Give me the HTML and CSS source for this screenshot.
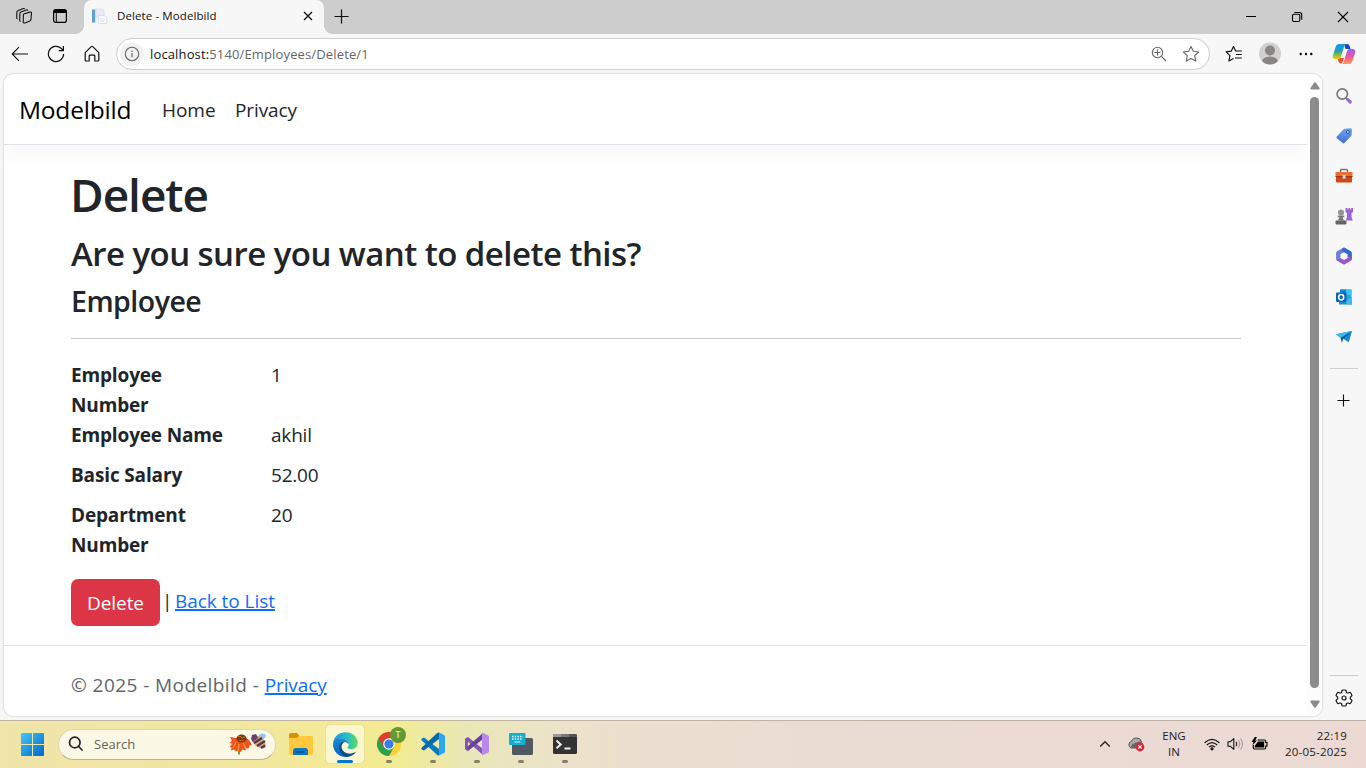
FILE: index.html
```html
<!DOCTYPE html>
<html lang="en">
<head>
<meta charset="utf-8">
<title>Delete - Modelbild</title>
<link rel="stylesheet" href="styles.css">
</head>
<body>
<div class="screen">
  <header class="tabstrip">
    <div class="strip-btn"><svg width="18" height="18" viewBox="0 0 18 18" fill="none" stroke="#111" stroke-width="1.1" stroke-linejoin="round"><path d="M9.300 6.800l5.500-1.700q1.700-.4 1.700 1.100l-.6 6.400q-.1 1-1 1.300l-5 2q-1.700.5-1.700-1l.2-6.800q0-1 .9-1.300z"/><path d="M5.700 14.300q-1.100 0-1-1.300l.2-6.600q0-1.100 1-1.500l5.500-2q1.200-.4 1.500.7"/><path d="M2.600 11.900q-1-.2-.9-1.300l.2-5.400q0-1 .9-1.400L8.300 1.600q1-.4 1.500.4"/></svg></div>
    <div class="strip-btn"><svg width="16" height="16" viewBox="0 0 16 16"><rect x="1.600" y="1.600" width="12.800" height="12.800" rx="2.200" fill="none" stroke="#000" stroke-width="1.200"/><path d="M1.500 3.500Q1.500 1.500 3.500 1.500h9q2 0 2 2V5h-13z"/><path d="M4.300 5v9" stroke="#000"/></svg></div>
    <div class="tab">
      <svg width="17" height="17" viewBox="0 0 17 17"><path d="M1 1h12v14H1z" fill="#eef1f5"/><path d="M1 1.500h3.200v13H1z" fill="#5fa3d6"/><path d="M5 1h6l2 2v6H5z" fill="#e8ecf1" stroke="#d5dae0" stroke-width=".6"/><path d="M7.500 7.500h6l2.300 2v6H7.500z" fill="#f8f9fb" stroke="#d0d5dc" stroke-width=".7"/><path d="M9 11h5M9 13.200h4" stroke="#cfd4dc" stroke-width=".8"/></svg>
      <span class="tab-title">Delete - Modelbild</span>
      <svg width="10" height="10" viewBox="0 0 10 10" stroke="#111" stroke-width="1.300"><path d="M1 1l8 8M9 1L1 9"/></svg>
    </div>
    <svg class="newtab" width="15" height="15" viewBox="0 0 15 15" stroke="#111" stroke-width="1.200"><path d="M7.500 .5v14M.5 7.500h14"/></svg>
    <div class="wincontrols">
      <svg width="12" height="12" viewBox="0 0 12 12"><path d="M1 5.500h10" stroke="#000"/></svg>
      <svg width="12" height="12" viewBox="0 0 12 12" fill="none" stroke="#000" stroke-width="1.100"><rect x="1.500" y="3.200" width="7.300" height="7.300" rx="1.400"/><path d="M3.500 1.500h5q2.200 0 2.200 2.200v5"/></svg>
      <svg width="12" height="12" viewBox="0 0 12 12" stroke="#000" stroke-width="1.100"><path d="M1 1l10 10M11 1L1 11"/></svg>
    </div>
  </header>

  <div class="toolbar">
    <div class="tool"><svg width="18" height="16" viewBox="0 0 18 16" fill="none" stroke="#111" stroke-width="1.100"><path d="M17 8H1.500M8 1.200L1.200 8 8 14.800"/></svg></div>
    <div class="tool"><svg width="18" height="18" viewBox="0 0 18 18" fill="none" stroke="#111" stroke-width="1.200"><path d="M16.600 9A7.600 7.600 0 1 1 14 3.200l2.300 2.300M16.400 1v4.600h-4.600"/></svg></div>
    <div class="tool"><svg width="16" height="17" viewBox="0 0 16 17" fill="none" stroke="#111" stroke-width="1.200" stroke-linejoin="round"><path d="M1.200 7.700L7.200 1.600q.8-.7 1.600 0l6 6.100V15q0 1-1 1h-3v-5q0-.8-.8-.8H6q-.8 0-.8.8v5h-3q-1 0-1-1z"/></svg></div>
    <div class="address">
      <span class="info"><svg width="16" height="16" viewBox="0 0 16 16" fill="none" stroke="#666" stroke-width="1.100"><circle cx="8" cy="8" r="6.700"/><path d="M8 7v4.300M8 4.500V6" stroke-width="1.200"/></svg></span>
      <span class="url"><b>localhost:</b>5140/Employees/Delete/1</span>
      <span class="address-icons">
        <svg width="16" height="16" viewBox="0 0 16 16" fill="none" stroke="#666" stroke-width="1.100"><circle cx="6.500" cy="6.500" r="5.200"/><path d="M10.400 10.400l4.600 4.600M3.500 6.500h6M6.500 3.500v6"/></svg>
        <svg width="18" height="18" viewBox="0 0 18 18" fill="none" stroke="#666" stroke-width="1.100" stroke-linejoin="round"><path d="M9 1.400l2.300 4.900 5.400.7-4 3.700 1 5.400L9 13.500l-4.700 2.600 1-5.400-4-3.700 5.400-.7z"/></svg>
      </span>
    </div>
    <div class="tool fav"><svg width="18" height="18" viewBox="0 0 18 18" fill="none" stroke="#111" stroke-width="1.200" stroke-linejoin="round"><path d="M10.800 6.200L8.500 1.600 6.200 6.200l-5 .7 3.700 3.700-1 5.400 4.600-2.500M10.800 6h6M11 9.500h5.800M10 13h6.800"/></svg></div>
    <div class="tool"><svg width="22" height="23" viewBox="0 0 22 23"><defs><clipPath id="face"><circle cx="11" cy="11.500" r="11"/></clipPath></defs><g clip-path="url(#face)"><path d="M0 0h22v23H0z" fill="#d2d0ce"/><circle cx="11" cy="8.500" r="5" fill="#888582"/><ellipse cx="11" cy="20" rx="8" ry="5.600" fill="#888582"/></g></svg></div>
    <div class="tool"><svg width="14" height="4" viewBox="0 0 14 4"><circle cx="1.700" cy="2" r="1.200"/><circle cx="7" cy="2" r="1.200"/><circle cx="12.300" cy="2" r="1.200"/></svg></div>
    <div class="copilot"><svg width="24" height="22" viewBox="0 0 24 22"><defs><linearGradient id="cpA" x2="0" y2="1"><stop stop-color="#159cf0"/><stop offset=".45" stop-color="#219ec0"/><stop offset=".7" stop-color="#79bd42"/><stop offset="1" stop-color="#f7c900"/></linearGradient><linearGradient id="cpB" x2="0" y2="1"><stop stop-color="#a05bff"/><stop offset=".5" stop-color="#ee5695"/><stop offset="1" stop-color="#ff9b56"/></linearGradient></defs><path d="M12 1h3q2 0 2.600 2l1 3h-5z" fill="#1748c9"/><path d="M6 15h6l-1.500 4Q9.800 21 8 20.500 6.700 20 6 17z" fill="#ed5132"/><path d="M7 1h8q-2 0-2.700 2L9.200 13q-.7 3-3.200 3H3.500Q.1 16 1 12L3.600 4Q4.500 1 7 1z" fill="url(#cpA)"/><path d="M17 21H9q2 0 2.700-2l3.100-10q.7-3 3.200-3h2.500q3.400 0 2.500 4l-2.600 8q-.9 3-3.400 3z" fill="url(#cpB)"/></svg></div>
  </div>

  <div class="middle">
    <div class="viewport">
      <div class="page">
        <nav class="navbar"><a class="brand">Modelbild</a><a class="home">Home</a><a class="privacy">Privacy</a></nav>
        <main class="container">
          <h1>Delete</h1>
          <h3>Are you sure you want to delete this?</h3>
          <h4>Employee</h4>
          <hr>
          <dl>
            <dt>Employee<br>Number</dt><dd>1</dd>
            <dt>Employee Name</dt><dd>akhil</dd>
            <dt>Basic Salary</dt><dd>52.00</dd>
            <dt>Department<br>Number</dt><dd>20</dd>
          </dl>
          <div class="actions"><button class="danger">Delete</button><span class="bar">|</span><a class="link">Back to List</a></div>
        </main>
        <footer class="footer"><span class="copy">© 2025 - Modelbild - </span><a class="link">Privacy</a></footer>
      </div>
      <div class="scrollbar">
        <svg width="10" height="8" viewBox="0 0 10 8"><path d="M4 .8Q5-.4 6 .8L9.500 6q.8 1.500-1 1.500h-7Q-.3 7.500.5 6z" fill="#8b8b8b"/></svg>
        <div class="thumb"></div>
        <svg width="10" height="8" viewBox="0 0 10 8"><path d="M4 7.200Q5 8.400 6 7.200L9.500 2q.8-1.500-1-1.500h-7Q-.3.5.5 2z" fill="#8b8b8b"/></svg>
      </div>
    </div>

    <aside class="sidebar">
      <div class="side"><svg width="18" height="18" viewBox="0 0 18 18" fill="none"><circle cx="7.300" cy="7" r="5.200" stroke="#777" stroke-width="1.700"/><path d="M10.800 10.800l2 2" stroke="#777" stroke-width="1.500"/><path d="M12.800 12.600l2.500 2.400" stroke="#9a66d6" stroke-width="3.200" stroke-linecap="round"/></svg></div>
      <div class="side"><svg width="18" height="18" viewBox="0 0 18 18"><defs><linearGradient id="tg" x2="0" y2="1"><stop stop-color="#6fa5f0"/><stop offset="1" stop-color="#416fd5"/></linearGradient></defs><path d="M9.500 1.800l6-.6q1.500 0 1.500 1.500l-.4 5.300q0 .7-.7 1.300l-6.600 6.800q-.8.8-1.600 0L1.700 11.200q-.8-.8 0-1.600l6.700-7.200q.4-.5 1.100-.6z" fill="url(#tg)"/><circle cx="12.900" cy="5" r="1.500" fill="#d7eaff" stroke="#24459a"/></svg></div>
      <div class="side"><svg width="18" height="16" viewBox="0 0 18 16"><path d="M5.500 4V2.500q0-1 1-1h5q1 0 1 1V4" fill="none" stroke="#777" stroke-width="1.400"/><rect x="1" y="4" width="16" height="10.500" rx="1" fill="#cf4914"/><path d="M.5 4h17v4.500H.5z" fill="#ed6e35"/><path d="M.5 8h17v1H.5z" fill="#a92f08"/><rect x="7.600" y="6.700" width="3" height="4" rx=".6" fill="#c4dce8"/></svg></div>
      <div class="side"><svg width="18" height="18" viewBox="0 0 18 18"><path d="M10.500 1h2v1.500h1V1h1.700v1.500h1V1H18v4l-1.500 1v4l1.300 3.500h-7L12 10V6l-1.500-1z" fill="#9b63d8"/><circle cx="6" cy="5.500" r="3" fill="#939393"/><path d="M2.700 8.500h6.600v1.700H7.600q0 2.200 2.400 3.300H2q2.400-1.100 2.400-3.300H2.700z" fill="#777"/><rect x=".5" y="13.500" width="11" height="4" rx="1" fill="#666"/></svg></div>
      <div class="side"><svg width="18" height="18" viewBox="0 0 18 18"><path d="M9 .5l7 4q.7.500.7 1.500v6q0 1-.7 1.500l-6 3.500q-1 .6-2 0l-6-3.500q-.7-.5-.7-1.500V6q0-1 .7-1.500z" fill="#8268ce"/><path d="M7.500 1.200L9 .5l7 4q.7.500.7 1.500v7l-4.700-2.200V7.400L7.300 4.500z" fill="#3269c9"/><path d="M16.700 10v2q0 1-.7 1.500l-6 3.500q-1 .6-2 0l-6-3.500L6.500 11 9 12.500l3-1.700 1.200-1.500z" fill="#9f58c7"/><path d="M1.300 6v6q0 1 .7 1.500L6 11V7.400L9 5.600 5.300 2.700 2 4.500q-.7.5-.7 1.500z" fill="#6a83da"/><path d="M9 5.200l3.500 2v3.800L9 13l-3.500-2V7.200z" fill="#fff"/></svg></div>
      <div class="side"><svg width="18" height="18" viewBox="0 0 18 18"><path d="M5 1.500h11.500V11L11 14z" fill="#2aa5e8"/><path d="M5 1.500h6v6H5z" fill="#1181d1"/><path d="M11 1.500h5.500V7H11z" fill="#3bc7ef"/><path d="M4 9l6 4 7-4v7.500H4z" fill="#168edb"/><path d="M10 13l7-4v7.500h-5z" fill="#41bce9"/><rect x="1" y="4.500" width="10.500" height="9.500" rx="1" fill="#0866b4"/><ellipse cx="6.200" cy="9.200" rx="2.500" ry="2.700" fill="none" stroke="#fff" stroke-width="1.500"/></svg></div>
      <div class="side"><svg width="18" height="16" viewBox="0 0 18 16"><path d="M.8 5.300L17 2 13.800 13.200 8 9.800z" fill="#1689d3"/><path d="M.8 5.300L17 2 5.500 9z" fill="#36bced"/><path d="M5.500 9L17 2 8 10l-1 4z" fill="#07579c"/></svg></div>
      <div class="rule"></div>
      <svg class="add" width="13" height="13" viewBox="0 0 13 13" stroke="#111" stroke-width="1.100"><path d="M6.500 .5v12M.5 6.500h12"/></svg>
      <div class="rule bottom-rule"></div>
      <svg width="18" height="18" viewBox="0 0 18 18" fill="none" stroke="#111" stroke-width="1.200" stroke-linejoin="round"><path d="M7 1.300q2-.6 4 0l.5 2.200q.8.600 1.600.5l2-.7q1.300 1.300 1.900 3.300l-1.600 1.500q-.2.900 0 1.800L17 11.400q-.6 2-1.900 3.300l-2-.7q-.8-.1-1.600.5l-.5 2.200q-2 .600-4 0l-.5-2.200q-.8-.6-1.600-.5l-2 .7Q1.600 13.400 1 11.400l1.600-1.500q.2-.9 0-1.800L1 6.600q.6-2 1.900-3.300l2 .7q.8.1 1.600-.5z"/><circle cx="9" cy="9" r="2"/></svg>
    </aside>
  </div>

  <footer class="taskbar">
    <div class="start"><svg width="23" height="23" viewBox="0 0 23 23"><defs><linearGradient id="wn" x2="1" y2="1"><stop stop-color="#43c7fc"/><stop offset="1" stop-color="#0067c8"/></linearGradient></defs><path d="M1 0h10v11H0V1Q0 0 1 0zM12 0h10q1 0 1 1v10H12zM0 12h11v11H1q-1 0-1-1zM12 12h11v10q0 1-1 1H12z" fill="url(#wn)"/></svg></div>
    <div class="search">
      <svg width="16" height="16" viewBox="0 0 16 16" fill="none" stroke="#222" stroke-width="1.700"><circle cx="6.800" cy="6.500" r="5.300"/><path d="M10.600 10.500l4 4"/></svg>
      <span class="search-text">Search</span>
      <svg width="38" height="22" viewBox="0 0 38 22"><path d="M10 16v5.500" stroke="#4f8b28" stroke-width="1.600"/><path d="M1 4l6 1h10l3 2 3 5-2.500.5-.5 3-3-.5-.5 2.500-3-1-2 2.500-2.500-1.500-2 1-2-2-3 1 .5-3L.5 14 3 11 .5 9.500 3 8z" fill="#ed541b"/><path d="M7 9l-3 6M10 11l-1 7M14 10l3 6" stroke="#ff963c" stroke-width="1.400"/><ellipse cx="12.500" cy="5.500" rx="5" ry="4" fill="#7d3314"/><path d="M9 4l2-1 2 2 3-1M10 7l3 1 2-1" stroke="#c47d29" fill="none"/><path d="M30 2q3-3 7 0-1 5-6 6z" fill="#8cc5f0"/><path d="M24 3q6-2 10 3t2 9q-7 1-11-4t-1-8z" fill="#dea263"/><path d="M25 10l8-5M28 13l8-5M32 15l4-2.500" stroke="#4b365a" stroke-width="2.100"/><path d="M23 2l4-1 2 4-5 4-2-3z" fill="#65456d"/></svg>
    </div>
    <div class="apps">
      <div class="app"><svg width="24" height="22" viewBox="0 0 24 22"><path d="M0 2q0-2 2-2h6l2.500 3H22q2 0 2 2v3H0z" fill="#d89400"/><path d="M0 5h8l2-2h12q2 0 2 2v15q0 2-2 2H2q-2 0-2-2z" fill="#ffc83d"/><path d="M4 22v-4q0-3 3-3h9q3 0 3 3v4z" fill="#0876c8"/><path d="M7 19h9" stroke="#064e88" stroke-width="1.500"/></svg></div>
      <div class="app active"><svg width="25" height="25" viewBox="0 0 24 24"><defs><linearGradient id="ed1" x2="1" y2="0"><stop stop-color="#1699de"/><stop offset=".6" stop-color="#28bfc6"/><stop offset="1" stop-color="#67dc58"/></linearGradient><linearGradient id="ed2" x2="0" y2="1"><stop stop-color="#168cd5"/><stop offset="1" stop-color="#0b61b9"/></linearGradient></defs><path d="M.2 10C1.300 4 6 .2 12 .2c6.600 0 11.800 4.600 11.800 10 0 4-3 6.300-6.200 6.300-2.500 0-4-.8-3.500-1.800.6-.8 1-1.500 1-2.700C15 8 11 6 7.500 6.200 4 6.300 1.500 8 .2 10z" fill="url(#ed1)"/><path d="M.1 11C.8 7 4.500 6.100 7.500 6.100c4.500 0 7.600 3 7.600 5.900-1-1.500-2.300-2.100-3.600-2.100-2 0-3.600 2-3.400 4.500.2 4 4.400 6.500 8 6.500 2 0 3.800-.6 5.900-2-.8 1.800-4.500 5-10 5C5.200 23.900-.5 18 .1 11z" fill="url(#ed2)"/><path d="M8.500 9.600C5.500 12 5.800 16 7 18.700c1.200 3 4 4.900 6.700 5 4-.4 6.900-2.700 8.200-4.800-2.100 1.400-3.900 2-5.900 2-3.600 0-7.800-2.500-8-6.500 0-2 .7-3.700 2.500-4.400z" fill="#114a8b"/></svg></div>
      <div class="app open"><svg width="24" height="24" viewBox="0 0 24 24"><circle cx="12" cy="12" r="12" fill="#ffcf33"/><path d="M12 12L1.600 6A12 12 0 0 0 12 24l5-9z" fill="#2ca24c"/><path d="M1.600 6A12 12 0 0 1 22.400 6H12v6l-5.200 3z" fill="#e33b2e"/><circle cx="12" cy="12" r="5.800" fill="#fff"/><circle cx="12" cy="12" r="4.600" fill="#397de9"/></svg><span class="badge">T</span></div>
      <div class="app open"><svg width="24" height="24" viewBox="0 0 24 24"><path d="M1.200 6.300L3 5.500 18 17v6.300q-1 .4-1.800-.4L.8 8.500q-1-.9.4-2.200z" fill="#0879c5"/><path d="M1.200 17.700L3 18.500 18 7V.7q-1-.4-1.800.4L.8 15.500q-1 .9.4 2.200z" fill="#0a68ad"/><path d="M18 .5l5 2.400q1 .5 1 1.500v15.200q0 1-1 1.500l-5 2.400z" fill="#29a6ee"/></svg></div>
      <div class="app open"><svg width="24" height="24" viewBox="0 0 24 24"><path d="M0 7l3-2 15 12v6L2.500 9.500v6L0 17z" fill="#8558b8"/><path d="M0 17l3 2L18 7V1L2.500 14.500z" fill="#68429b"/><path d="M0 7l3-2v4L2.500 15 3 19l-3-2z" fill="#8356b2"/><path d="M17 .5l6 2.700q1 .5 1 1.500v14.600q0 1-1 1.500l-6 2.700z" fill="#b98aec"/></svg></div>
      <div class="app open"><svg width="24" height="22" viewBox="0 0 24 22"><rect x="3" y="5" width="21" height="17" rx="1.500" fill="#525961"/><rect width="16.500" height="12" rx="1" fill="#12afd3"/><path d="M3 3.500h11M3 6h11" stroke="#e5faff" stroke-width="1.300" stroke-dasharray="1.400 1.300"/><path d="M5.500 9h6" stroke="#e5faff"/></svg></div>
      <div class="app open"><svg width="24" height="20" viewBox="0 0 24 20"><rect width="24" height="20" rx="1.500" fill="#333"/><path d="M1.500 0H16v3H0V1.500Q0 0 1.500 0z" fill="#999"/><path d="M8 0h8v3H8z" fill="#777"/><path d="M16 0h6.500Q24 0 24 1.500V3h-8z" fill="#555"/><path d="M3.500 6.500l4.200 3.900-4.200 3.900M11.500 14.500h6" stroke="#eee" stroke-width="2" fill="none"/></svg></div>
    </div>
    <div class="tray">
      <svg class="chev" width="12" height="8" viewBox="0 0 12 8" fill="none" stroke="#222" stroke-width="1.300"><path d="M1.200 6.500L6 1.700l4.800 4.800"/></svg>
      <svg class="cloud" width="17" height="16" viewBox="0 0 17 16"><path d="M3 12Q.8 11 .8 8.500q0-2.200 2.500-3 1.600-3.800 5.700-3.500 3.500.2 4.500 3.500L9 12z" fill="#aaa" stroke="#555"/><path d="M3 11.500Q3 8 7 7q3-2 6.500-1.500L15 8l-5 4z" fill="#656565"/><circle cx="12" cy="11" r="4.400" fill="#dc2637"/><path d="M10.300 9.300l3.400 3.400m0-3.400l-3.400 3.400" stroke="#fff" stroke-width="1.200"/></svg>
      <div class="lang"><span>ENG</span><span>IN</span></div>
      <svg class="wifi" width="16" height="13" viewBox="0 0 16 13" fill="none" stroke="#111" stroke-width="1.200"><path d="M.6 4.800q7.400-7 14.800 0M2.800 7q5.200-4.800 10.400 0M5 9.100q3-2.600 6 0"/><circle cx="8" cy="10.800" r="1" fill="#111"/></svg>
      <svg class="sound" width="17" height="14" viewBox="0 0 17 14" fill="none" stroke="#111" stroke-width="1.100" stroke-linejoin="round"><path d="M1 4.700h2.500l3.300-3v10.600l-3.300-3H1z"/><path d="M9 4.700q1.600 2.300 0 4.600"/><path d="M11.200 3q3 4 0 8M13.500 1.500q4 5.500 0 11" stroke="#aaa09d"/></svg>
      <svg class="battery" width="17" height="14" viewBox="0 0 17 14"><path d="M6.500 3h7q1.200 0 1.200 1.200v1.300h1.300v3.500h-1.300v1.800q0 1.200-1.200 1.200H3.500q-1.200 0-1.200-1.200V8" fill="none" stroke="#000" stroke-width="1.100"/><path d="M7 4.500h6.200v6H3.800V8.800z"/><path d="M3.800 0L.5 5h2L1.300 8.500 6 3.600H4.200L6 0z"/></svg>
      <div class="clock"><span>22:19</span><span>20-05-2025</span></div>
    </div>
  </footer>
</div>
</body>
</html>
```
FILE: styles.css
```css
* { box-sizing: border-box; }
body { margin: 0; font-family: "Open Sans", "Noto Sans", sans-serif; color: #212529; }
svg { display: block; flex: none; }
.screen { width: 1366px; height: 768px; display: flex; flex-direction: column; overflow: hidden; background: #f7f7f7; }

/* Browser frame */
.tabstrip { height: 34px; flex: none; display: flex; align-items: center; background: #cdcdcd; padding-left: 6px; }
.strip-btn { width: 36px; display: flex; justify-content: center; padding-bottom: 2px; }
.tab { position: relative; width: 240px; height: 34px; margin-left: 6px; display: flex; align-items: center; padding: 0 11px 2px 7px; background: #f7f7f7; border-radius: 8px 8px 0 0; }
.tab::before, .tab::after { content: ""; position: absolute; bottom: 0; width: 8px; height: 8px; }
.tab::before { left: -8px; background: radial-gradient(circle at 0 0, #cdcdcd 7.5px, #f7f7f7 8px); }
.tab::after { right: -8px; background: radial-gradient(circle at 100% 0, #cdcdcd 7.5px, #f7f7f7 8px); }
.tab-title { flex: 1; margin: -2px 0 0 9px; font-size: 11.5px; letter-spacing: .1px; color: #111; white-space: nowrap; }
.newtab { margin: 0 0 2px 10px; }
.wincontrols { margin-left: auto; display: flex; gap: 34px; padding-right: 17px; }
.toolbar { height: 39px; flex: none; display: flex; align-items: center; padding-left: 2px; }
.tool { width: 36px; display: flex; justify-content: center; flex: none; }
.address { width: 1094px; height: 32px; margin: 1px 6px 0; border: 1px solid #cfcfcf; border-radius: 16px; background: #fff; display: flex; align-items: center; padding: 0 9px 0 3px; }
.info { width: 24px; height: 24px; border-radius: 50%; background: #f1f1f1; display: grid; place-items: center; }
.url { font-size: 13px; letter-spacing: .14px; margin-left: 6px; color: #666; white-space: nowrap; }
.url b { font-weight: 400; color: #111; }
.address-icons { margin-left: auto; display: flex; gap: 15px; align-items: center; }
.copilot { margin-left: 8px; }
.middle { height: 647px; flex: none; display: flex; padding: 1px 0 0 4px; }
.viewport { width: 1318px; height: 642px; background: #fff; border-radius: 9px; display: flex; overflow: hidden; box-shadow: 0 0 2px rgba(0,0,0,.3); }
.scrollbar { width: 15px; background: #fcfcfc; display: flex; flex-direction: column; align-items: center; padding: 8px 0 8px 0; }
.thumb { width: 9px; height: 591px; margin: 7px 0 12px; border-radius: 5px; background: #8b8b8b; }
.sidebar { width: 44px; display: flex; flex-direction: column; align-items: center; padding-top: 2px; }
.side { height: 40.1px; display: grid; place-items: center; flex: none; }
.rule { width: 28px; height: 1px; background: #cfcfcf; margin-top: 11px; flex: none; }
.add { margin: 25px 1px 0 0; }
.bottom-rule { margin: 268px 0 13px; }

/* Application page */
.page { width: 1303px; display: flex; flex-direction: column; }
.navbar { height: 71px; flex: none; display: flex; align-items: center; padding: 1px 0 0 15px; border-bottom: 1px solid #dee2e6; box-shadow: 0 10px 20px rgba(0,0,0,.035); }
.brand { font-size: 24.5px; letter-spacing: -.2px; color: #000; width: 143px; }
.home { font-size: 19px; width: 73px; letter-spacing: -.05px; }
.privacy { font-size: 19px; letter-spacing: -.1px; }
.container { width: 1170px; margin-left: 67px; padding-top: 20px; height: 500px; }
h1, h3, h4 { font-weight: 560; line-height: 1.2; margin: 0 0 10px; white-space: nowrap; }
h1 { font-size: 46px; height: 56px; padding-top: 2px; letter-spacing: -1.05px; margin-left: -1px; }
h3 { font-size: 33px; height: 41px; padding-top: 3px; letter-spacing: -.55px; }
h4 { font-size: 28.5px; height: 35px; padding-top: 2px; letter-spacing: -.5px; }
hr { border: 0; border-top: 1px solid #c8c9ca; margin: 21px 0; }
dl { margin: 0; display: grid; grid-template-columns: 200px 1fr; font-size: 19px; line-height: 30px; }
dt { font-weight: 700; letter-spacing: -.15px; }
dd { margin: 0 0 10px; letter-spacing: -.2px; }
.actions { margin-top: 19px; display: flex; align-items: flex-start; font-size: 19px; line-height: 30px; letter-spacing: -.05px; }
.danger { width: 89px; height: 47px; border: 0; border-radius: 7px; background: #dc3545; color: #fff; font: inherit; letter-spacing: -.08px; padding: 0; }
.bar { margin: 7px 6px 0 2px; width: 7px; }
.actions .link { margin-top: 7px; }
.link { color: #0d6efd; text-decoration: underline; text-decoration-thickness: 1.5px; }
.footer { height: 71px; border-top: 1px solid #dee2e6; padding: 4px 0 0 67px; font-size: 19px; line-height: 71px; color: #616568; display: flex; white-space: pre; }
.copy { letter-spacing: .43px; }
.footer .link { letter-spacing: -.1px; }

/* Taskbar */
.taskbar { height: 48px; flex: none; display: flex; align-items: center; padding-bottom: 1px; border-top: 1px solid #bdb4a4; background: linear-gradient(90deg, #f0e5aa 0, #f0e7a2 16%, #f4e996 24%, #f2ec92 29%, #e9e7b5 34%, #ebe4c5 39%, #eddfd0 46%, #eadbd3 68%, #ecd9d4 100%); }
.start { width: 58px; padding-left: 21px; }
.search { width: 218px; height: 31px; border: 1px solid #dbd6b4; border-bottom-color: #bbb58e; border-radius: 16px; background: #fbf8e5; display: flex; align-items: center; padding: 0 8px 0 9px; }
.search-text { margin-left: 10px; flex: 1; font-size: 13px; color: #666354; }
.apps { display: flex; margin-left: 3px; }
.app { position: relative; width: 44px; height: 44px; display: grid; place-items: center; }
.active { width: 38px; height: 38px; margin: 3px; border-radius: 4px; background: #faf6cf; box-shadow: 0 0 1px rgba(120,110,50,.5); }
.open::after, .active::after { content: ""; position: absolute; left: 19px; bottom: 3px; width: 6px; height: 3px; border-radius: 2px; background: #858069; }
.active::after { left: 11px; bottom: 0; width: 16px; background: #0078d4; }
.badge { position: absolute; left: 23px; top: 5px; width: 16px; height: 16px; border-radius: 50%; background: #649a36; color: #fff; font-size: 9px; line-height: 16px; text-align: center; }
.tray { margin-left: auto; display: flex; align-items: center; padding-right: 19px; color: #222; }
.lang, .clock { display: flex; flex-direction: column; font-size: 11.5px; line-height: 16px; }
.lang { width: 30px; align-items: center; margin: 0 15px 0 14px; }
.clock { width: 64px; align-items: flex-end; margin-left: 15px; white-space: nowrap; letter-spacing: .2px; }
.cloud { margin-left: 17px; }
.sound { margin-left: 7px; }
.battery { margin-left: 7px; }
```
